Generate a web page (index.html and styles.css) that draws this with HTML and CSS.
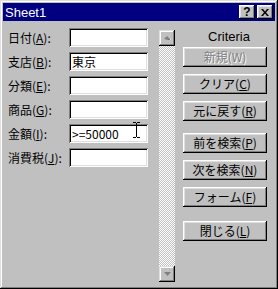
FILE: index.html
```html
<!DOCTYPE html>
<html lang="ja">
<head>
  <meta charset="UTF-8" />
  <title>Sheet1</title>
  <link rel="stylesheet" href="styles.css">
</head>
<body>
  <div class="window">
    <div class="titlebar">
      <span class="title">Sheet1</span>
      <div class="caption-btns">
        <div class="cbtn help">?</div>
        <div class="cbtn close">
          <svg width="8" height="7" viewBox="0 0 8 7">
            <path d="M0 0h2l2 2.5 2-2.5h2l-3 3.5 3 3.5h-2l-2-2.5-2 2.5h-2l3-3.5z" fill="#000"/>
          </svg>
        </div>
      </div>
    </div>

    <div class="content">
      <div class="fields">
        <div class="row"><label>日付(<u>A</u>):</label><div class="field"></div></div>
        <div class="row"><label>支店(<u>B</u>):</label><div class="field">東京</div></div>
        <div class="row"><label>分類(<u>E</u>):</label><div class="field"></div></div>
        <div class="row"><label>商品(<u>G</u>):</label><div class="field"></div></div>
        <div class="row"><label>金額(<u>I</u>):</label>
          <div class="field">&gt;=50000
            <svg class="ibeam" width="7" height="16" viewBox="0 0 7 16">
              <path d="M0 0.5h3M4 0.5h3M3.5 1v14M0 15.5h3M4 15.5h3" stroke="#000" fill="none"/>
            </svg>
          </div>
        </div>
        <div class="row"><label>消費税(<u>J</u>):</label><div class="field"></div></div>
      </div>

      <div class="scrollbar">
        <div class="sbtn">
          <svg width="7" height="4" viewBox="0 0 7 4"><path d="M4 1l3 3h-1z" fill="#fff"/><path d="M3 0l3 3h-6z" fill="#808080"/><path d="M0 3h6v0.5" /></svg>
        </div>
        <div class="track"></div>
        <div class="sbtn">
          <svg width="7" height="4" viewBox="0 0 7 4"><path d="M4 4l3-3v0z" fill="#fff"/><path d="M0 0h7l-3.5 4z" fill="#808080"/></svg>
        </div>
      </div>

      <div class="actions">
        <div class="caption">Criteria</div>
        <div class="btn disabled">新規(W)</div>
        <div class="btn">クリア(<u>C</u>)</div>
        <div class="btn">元に戻す(<u>R</u>)</div>
        <div class="btn group">前を検索(<u>P</u>)</div>
        <div class="btn">次を検索(<u>N</u>)</div>
        <div class="btn">フォーム(<u>F</u>)</div>
        <div class="btn group2">閉じる(<u>L</u>)</div>
      </div>
    </div>
  </div>
</body>
</html>
```

FILE: styles.css
```css
body {
  margin: 0;
  background: #c0c0c0;
  font-family: "Noto Sans CJK JP", "Liberation Sans", sans-serif;
  font-size: 12px;
  color: #000;
}

.window {
  width: 278px;
  height: 289px;
  box-sizing: border-box;
  padding: 3px;
  background: #c0c0c0;
  box-shadow: inset -1px -1px #000, inset 1px 1px #dfdfdf,
              inset -2px -2px #808080, inset 2px 2px #fff;
  display: flex;
  flex-direction: column;
}

.titlebar {
  height: 18px;
  background: #000080;
  color: #fff;
  display: flex;
  align-items: center;
  justify-content: space-between;
}

.title {
  font-family: "Liberation Sans", sans-serif;
  font-size: 13px;
  padding-left: 2px;
}

.caption-btns {
  display: flex;
  gap: 2px;
  margin-right: 2px;
}

.cbtn {
  width: 16px;
  height: 14px;
  box-sizing: border-box;
  background: #c0c0c0;
  box-shadow: inset -1px -1px #000, inset 1px 1px #fff,
              inset -2px -2px #808080, inset 2px 2px #dfdfdf;
  display: flex;
  align-items: center;
  justify-content: center;
  color: #000;
}

.help {
  font-family: "Liberation Sans", sans-serif;
  font-weight: bold;
  font-size: 12px;
  line-height: 14px;
}

.content {
  display: flex;
  flex: 1;
}

.fields {
  margin-left: 5px;
  padding-top: 7px;
  display: flex;
  flex-direction: column;
  gap: 5px;
}

.row {
  display: flex;
  align-items: center;
}

.row label {
  width: 61px;
  line-height: 14px;
}

u {
  text-underline-offset: 1px;
}

.field {
  position: relative;
  width: 79px;
  height: 19px;
  box-sizing: border-box;
  background: #fff;
  padding: 2px 3px 0;
  line-height: 15px;
  box-shadow: inset 1px 1px #808080, inset -1px -1px #fff,
              inset 2px 2px #000, inset -2px -2px #dfdfdf;
}

.ibeam {
  position: absolute;
  left: 64px;
  top: -2px;
}

.scrollbar {
  margin-left: 11px;
  margin-top: 9px;
  width: 16px;
  height: 252px;
  display: flex;
  flex-direction: column;
}

.sbtn {
  height: 16px;
  flex: none;
  background: #c0c0c0;
  box-shadow: inset -1px -1px #000, inset 1px 1px #dfdfdf,
              inset -2px -2px #808080, inset 2px 2px #fff;
  display: flex;
  align-items: center;
  justify-content: center;
}

.track {
  flex: 1;
  background: conic-gradient(#fff 25%, #c0c0c0 0 50%, #fff 0 75%, #c0c0c0 0);
  background-size: 2px 2px;
}

.actions {
  margin-left: 8px;
  margin-top: 9px;
  width: 84px;
  display: flex;
  flex-direction: column;
  gap: 7px;
}

.caption {
  text-align: center;
  padding-left: 8px;
  line-height: 14px;
  margin-bottom: -4px;
  font-family: "Liberation Sans", sans-serif;
  font-size: 13px;
}

.btn {
  height: 20px;
  box-sizing: border-box;
  text-align: center;
  line-height: 19px;
  box-shadow: inset -1px -1px #000, inset 1px 1px #fff,
              inset -2px -2px #808080, inset 2px 2px #dfdfdf;
}

.btn.disabled {
  color: #808080;
  text-shadow: 1px 1px #fff;
}

.group {
  margin-top: 5px;
}

.group2 {
  margin-top: 7px;
}
```
